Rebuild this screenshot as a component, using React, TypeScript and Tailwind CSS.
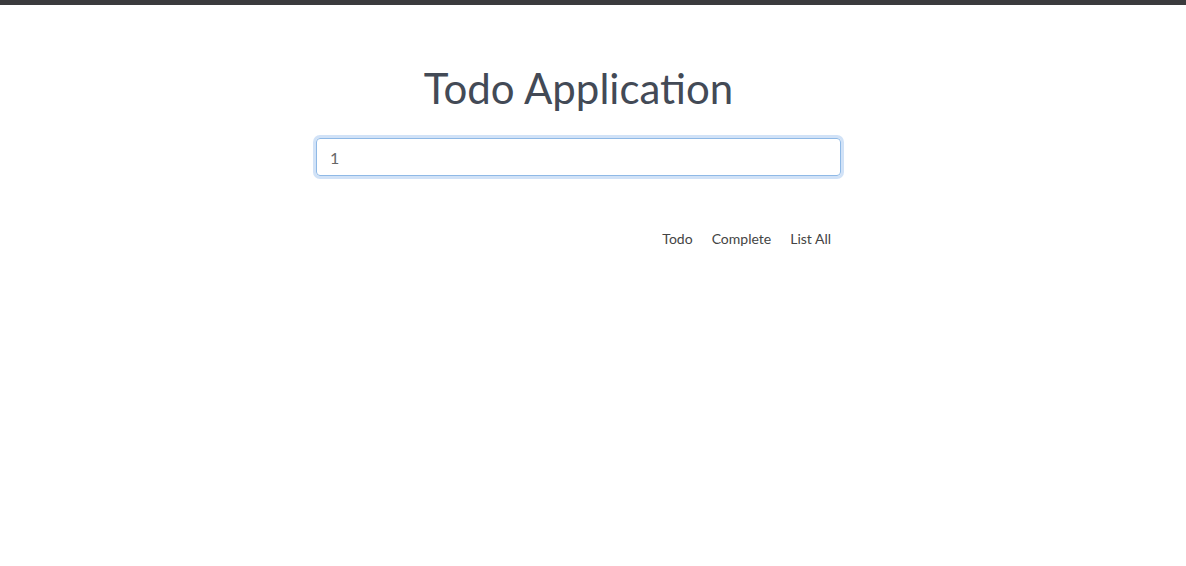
import React, { useState } from 'react';

export default function App() {
  const [text, setText] = useState('1');

  return (
    <div className="min-h-[566px] bg-white" style={{ fontFamily: 'Lato, "Open Sans", sans-serif' }}>
      <div className="h-[5px] bg-[#3b3b3d]" />
      <div className="flex justify-center pr-[29px]">
        <div className="w-[525px]">
          <h1 className="mt-[59px] text-center text-[42px] leading-[48px] font-normal text-[#434a56]">
            Todo Application
          </h1>
          <input
            type="text"
            value={text}
            autoFocus
            onChange={(e) => setText(e.target.value)}
            className="mt-[26px] block h-[38px] w-full rounded-[4px] border border-[#8fb9e6] px-[13px] text-[16px] text-[#666] caret-[#333] shadow-[0_0_0_3px_rgba(102,160,230,0.3)] outline-none"
          />
          <div className="mt-[52px] flex justify-end gap-[19px] pr-[10px] text-[14px] text-[#444]">
            <a href="#">Todo</a>
            <a href="#">Complete</a>
            <a href="#">List All</a>
          </div>
        </div>
      </div>
    </div>
  );
}
